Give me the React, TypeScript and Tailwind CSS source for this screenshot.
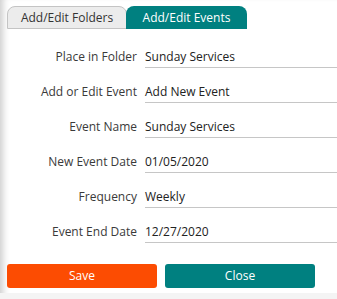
export default function App() {
  const rows = [
    ["Place in Folder", "Sunday Services"],
    ["Add or Edit Event", "Add New Event"],
    ["Event Name", "Sunday Services"],
    ["New Event Date", "01/05/2020"],
    ["Frequency", "Weekly"],
    ["Event End Date", "12/27/2020"],
  ];

  return (
    <div
      className="flex h-[299px] w-[337px] flex-col bg-white text-[12px] text-[#333] shadow-[inset_8px_0_7px_-5px_rgba(0,0,0,0.2)]"
      style={{ fontFamily: '"Open Sans", "Noto Sans", sans-serif' }}
    >
      <div className="flex pl-[7px] pt-[6px]">
        <div className="flex h-[23px] w-[120px] items-center justify-center rounded-t-[8px] border border-[#c4c4c4] bg-[#ececec] text-[#333]">
          Add/Edit Folders
        </div>
        <div className="-ml-px flex h-[23px] w-[121px] items-center justify-center rounded-t-[8px] bg-[#008080] text-white">
          Add/Edit Events
        </div>
      </div>

      <div className="mt-[4px] flex flex-col">
        {rows.map(([label, value]) => (
          <div key={label} className="flex h-[35px] items-end gap-[8px]">
            <div className="w-[137px] pb-[3px] text-right leading-4 text-[#3a3a3a]">
              {label}
            </div>
            <div className="flex-1 border-b border-[#c6c6c6] pb-[2px] leading-4 text-[#222]">
              {value}
            </div>
          </div>
        ))}
      </div>

      <div className="mt-[21px] flex gap-[8px] pl-[7px]">
        <button className="h-[24px] w-[150px] rounded-[3px] bg-[#fc4c02] text-white">
          Save
        </button>
        <button className="h-[24px] w-[150px] rounded-[3px] bg-[#008080] text-white">
          Close
        </button>
      </div>

      <div className="mt-auto h-[6px] bg-[#f4f4f4]" />
    </div>
  );
}
